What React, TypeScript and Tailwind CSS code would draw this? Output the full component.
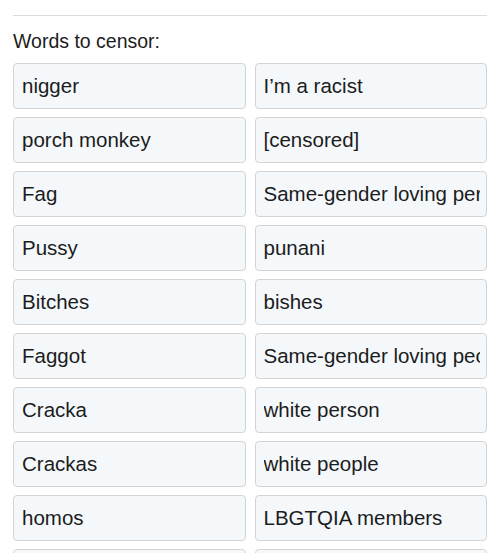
const rows: [string, string][] = [
  ["nigger", "I’m a racist"],
  ["porch monkey", "[censored]"],
  ["Fag", "Same-gender loving person"],
  ["Pussy", "punani"],
  ["Bitches", "bishes"],
  ["Faggot", "Same-gender loving people"],
  ["Cracka", "white person"],
  ["Crackas", "white people"],
  ["homos", "LBGTQIA members"],
  ["", ""],
];

const inputClass =
  "h-[46px] w-full rounded-[4px] border border-[#d2d4d6] bg-[#f4f8fb] pl-[8px] pr-[6px] text-[20.5px] text-[#1c1c1c] outline-none";

export default function App() {
  return (
    <div
      className="h-[553px] overflow-hidden bg-white px-[13px]"
      style={{ fontFamily: '"Liberation Sans", Arial, sans-serif' }}
    >
      <hr className="mt-[15px] border-0 border-t border-[#dcdcdc]" />
      <div className="mt-[12px] text-[19.5px] leading-[26px] text-[#1c1c1c]">
        Words to censor:
      </div>
      <div className="mt-[9px] grid grid-cols-2 gap-x-[9px] gap-y-[8px]">
        {rows.map(([word, replacement], i) => (
          <div key={i} className="contents">
            <input readOnly defaultValue={word} className={inputClass} />
            <input readOnly defaultValue={replacement} className={inputClass} />
          </div>
        ))}
      </div>
    </div>
  );
}
